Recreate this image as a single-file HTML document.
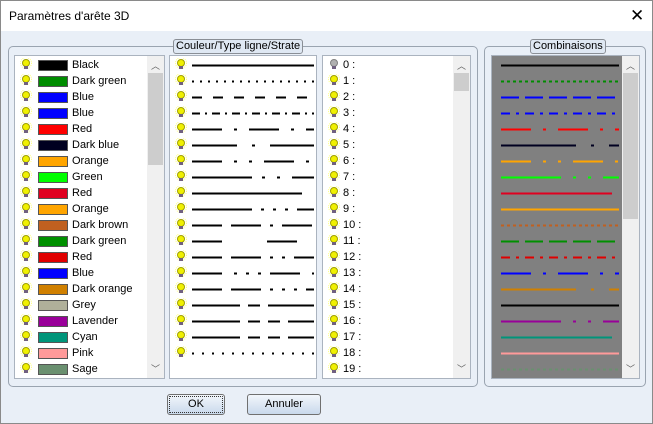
<!DOCTYPE html>
<html><head><meta charset="utf-8"><style>
*{box-sizing:border-box;margin:0;padding:0}
body{width:653px;height:424px;overflow:hidden;font-family:"Liberation Sans",sans-serif;font-size:11px;color:#000;background:#fff}
.win{position:absolute;left:0;top:0;width:653px;height:424px;border:1px solid #8a8a8a;background:#e9eff7}
.title{position:absolute;left:0;top:0;width:651px;height:30px;background:#fff;font-size:12px}
.title span{position:absolute;left:8px;top:8px}
.title .x{position:absolute;left:629px;top:5px;font-size:17px;font-weight:normal}
.grp{position:absolute;border:1px solid #9aa4b0;border-radius:5px}
.lbl{position:absolute;top:38px;height:15px;border:1px solid #8a8f96;border-radius:3px;background:#dfe8f3;font-size:11px;line-height:13px;padding:0 2px;white-space:nowrap}
.list{position:absolute;background:#fff;border:1px solid #aab3bf;overflow:hidden}
.sb{position:absolute;top:0;right:0;width:17px;bottom:0;background:#f0f0f0}
.sb .th{position:absolute;left:1px;width:15px;background:#cdcdcd}
.sb .a{position:absolute;left:0;width:17px;text-align:center;font-size:9px;color:#606060}
.btn{position:absolute;top:393px;height:21px;border:1px solid #707070;border-radius:3px;background:linear-gradient(#f2f6fb,#c9d9ec);text-align:center;line-height:19px;font-size:11px}
</style></head><body>
<div class="win">
<div class="title"><span>Paramètres d'arête 3D</span><span class="x">✕</span></div>
<div class="grp" style="left:7px;top:45px;width:470px;height:341px"></div>
<div class="grp" style="left:483px;top:45px;width:162px;height:341px"></div>
<div class="lbl" style="left:172px">Couleur/Type ligne/Strate</div>
<div class="lbl" style="left:529px">Combinaisons</div>
<div class="list" id="l1" style="left:13px;top:54px;width:151px;height:324px"><div class="sb"><div class="a" style="top:3px">︿</div><div class="th" style="top:17px;height:92px"></div><div class="a" style="bottom:3px">﹀</div></div></div>
<div class="list" id="l2" style="left:168px;top:54px;width:148px;height:324px"></div>
<div class="list" id="l3" style="left:321px;top:54px;width:149px;height:324px"><div class="sb"><div class="a" style="top:3px">︿</div><div class="th" style="top:17px;height:18px"></div><div class="a" style="bottom:3px">﹀</div></div></div>
<div class="list" id="l4" style="left:490px;top:54px;width:149px;height:324px;background:#808080"><div class="sb"><div class="a" style="top:3px">︿</div><div class="th" style="top:17px;height:146px"></div><div class="a" style="bottom:3px">﹀</div></div></div>
<div class="btn" style="left:166px;width:58px;outline:1px dotted #333;outline-offset:-3px">OK</div>
<div class="btn" style="left:246px;width:74px">Annuler</div>
</div>
<script>
var names=["Black","Dark green","Blue","Blue","Red","Dark blue","Orange","Green","Red","Orange","Dark brown","Dark green","Red","Blue","Dark orange","Grey","Lavender","Cyan","Pink","Sage"];
var cols=["#000","#008c00","#0000ff","#0000ff","#ff0000","#000020","#ffa500","#00ff00","#e00020","#ffa500","#c06020","#009000","#e00000","#0000ff","#d08000","#000","#990099","#00957a","#ff9a9a","#6a9070"];
var pats=["","2 6","10 11","8 5 2 5","30 12 3 12","45 15 3 15","30 12 3 12 3 12","60 10 3 12 3 12","","60 9 3 9 3 9 3 9","30 9 30 9 3 9","30 45","30 9 30 9 3 9 3 9","30 12 3 9 3 9 3 9","30 9 30 9 3 9 3 9 3 9","48 8 12 8","48 8 12 8 12 8","48 8 12 8 12 8","2 8","2 7"];
var lens=[122,122,122,122,122,122,122,122,110,122,122,122,122,122,122,122,122,122,122,0];
var cp=["","3 3","18 6","9 6 3 6","30 12 3 12","75 15 3 15","30 12 3 12 3 12","60 12 3 12 3 12","","","3 3","18 6","9 6 3 6","30 12 3 12","75 15 3 15","","60 12 3 12 3 12","","","3 3"];
var cl=[118,118,118,118,118,118,118,118,111,118,118,118,118,118,118,118,118,111,118,118];
function bulb(x,y,g){var c=g?"#b0b0b0":"#f0f000",s=g?"#808080":"#a0a000";return '<svg style="position:absolute;left:'+x+'px;top:'+y+'px" width="12" height="13">'+(g?'':'<circle cx="6" cy="5" r="5.5" fill="none" stroke="#ffff80" stroke-dasharray="1 1"/>')+'<circle cx="6" cy="5" r="3.5" fill="'+c+'" stroke="'+s+'"/><rect x="4" y="8" width="4" height="3" fill="#706080"/></svg>';}
var h1="",h2="",h3="",h4="";
for(var i=0;i<20;i++){var y=i*16+2;
h1+=bulb(5,y,0)+'<div style="position:absolute;left:23px;top:'+(y+2)+'px;width:30px;height:11px;border:1px solid #555;background:'+(i==15?"#b0b09a":cols[i])+'"></div><div style="position:absolute;left:57px;top:'+y+'px;line-height:14px">'+names[i]+'</div>';
h3+=bulb(5,y,i==0)+'<div style="position:absolute;left:20px;top:'+y+'px;line-height:14px">'+i+' :</div>';
if(i<19){h2+=bulb(5,y,0)+'<svg style="position:absolute;left:22px;top:'+(y+6)+'px" width="124" height="4"><line x1="0" y1="1.5" x2="'+lens[i]+'" y2="1.5" stroke="#000" stroke-width="2" stroke-dasharray="'+pats[i]+'"/></svg>';}
h4+='<svg style="position:absolute;left:9px;top:'+(y+6)+'px" width="120" height="4"><line x1="0" y1="1.5" x2="'+cl[i]+'" y2="1.5" stroke="'+cols[i]+'" stroke-width="2" stroke-dasharray="'+cp[i]+'"/></svg>';
}
document.getElementById("l1").insertAdjacentHTML("beforeend",h1);
document.getElementById("l2").insertAdjacentHTML("beforeend",h2);
document.getElementById("l3").insertAdjacentHTML("beforeend",h3);
document.getElementById("l4").insertAdjacentHTML("afterbegin",h4);
</script>
</body></html>
